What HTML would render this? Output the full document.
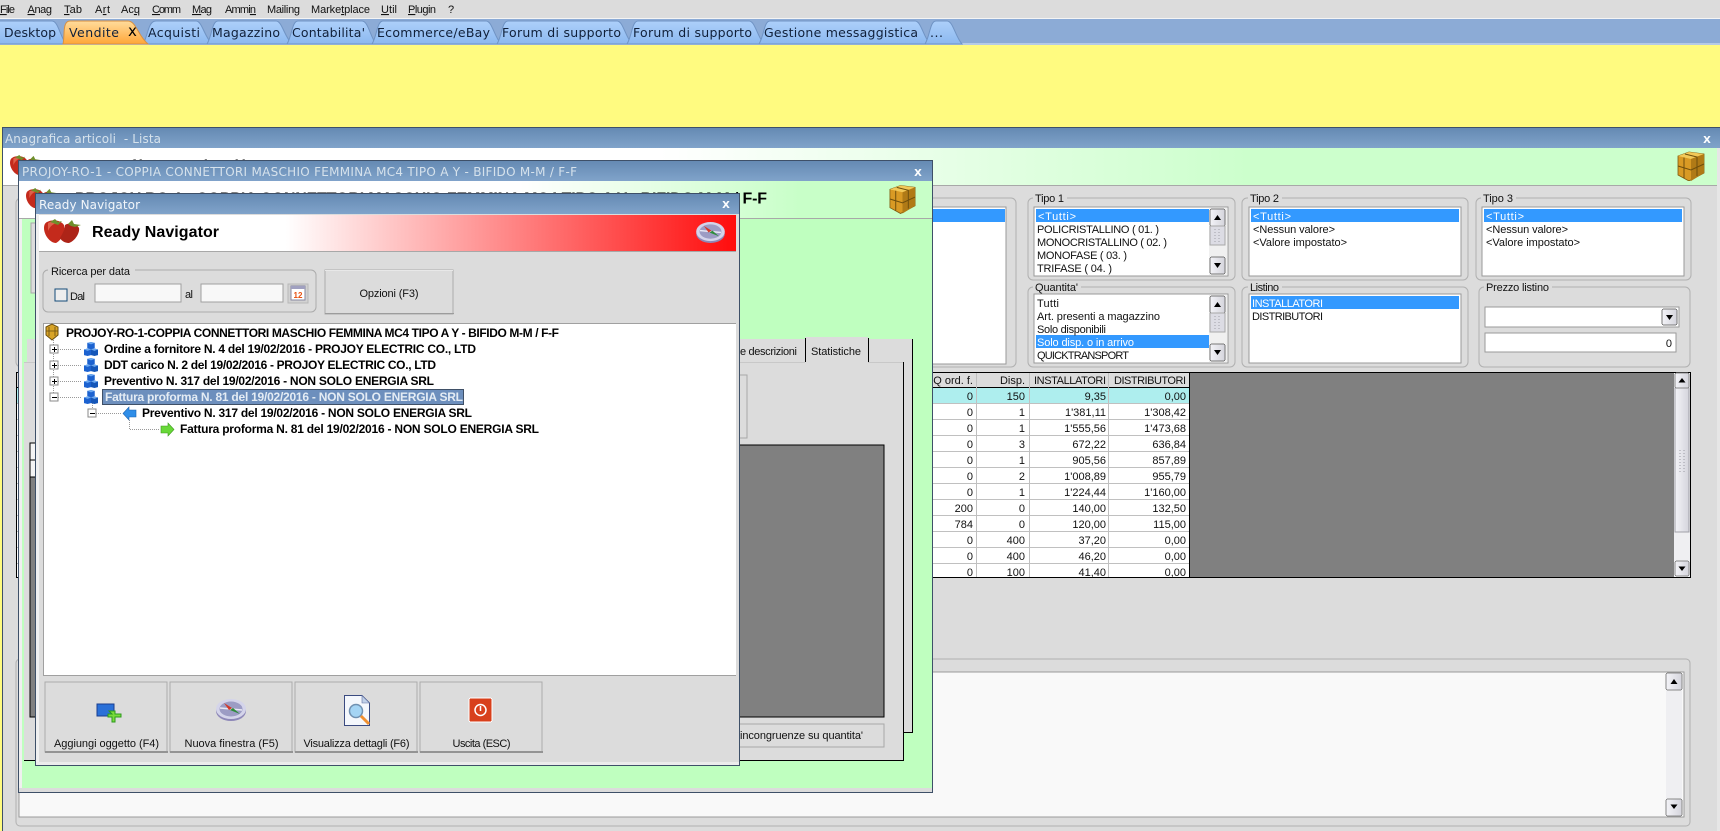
<!DOCTYPE html>
<html lang="it"><head><meta charset="utf-8"><title>Ready Navigator</title>
<style>
html,body{margin:0;padding:0;width:1720px;height:831px;overflow:hidden;background:#dcdcdc}
svg{display:block}
text{font-family:"Liberation Sans",sans-serif;font-size:11px;fill:#111;white-space:pre}
rect{shape-rendering:crispEdges}
.tab{font-family:"DejaVu Sans",sans-serif;font-size:12.5px;fill:#10203a}
.title{font-family:"DejaVu Sans",sans-serif;font-size:12px;fill:#d6e2ec}
.tree{font-family:"Liberation Sans",sans-serif;font-size:12px;font-weight:bold;fill:#000}
.num{font-size:11px;text-anchor:end}
.w{fill:#fff}
.c{text-anchor:middle}
.x{font-family:"DejaVu Sans",sans-serif;font-size:10px;font-weight:bold;fill:#fff;text-anchor:middle}
.hb{font-size:16px;font-weight:bold;fill:#000}
</style></head><body>
<svg width="1720" height="831" viewBox="0 0 1720 831" xmlns="http://www.w3.org/2000/svg">
<defs>
<linearGradient id="tb" x1="0" y1="0" x2="0" y2="1"><stop offset="0" stop-color="#add0fa"/><stop offset="1" stop-color="#8cb8f0"/></linearGradient>
<linearGradient id="to" x1="0" y1="0" x2="0" y2="1"><stop offset="0" stop-color="#ffdc9c"/><stop offset="1" stop-color="#ffa638"/></linearGradient>
<linearGradient id="tt" x1="0" y1="0" x2="0" y2="1"><stop offset="0" stop-color="#658ab3"/><stop offset="1" stop-color="#80a3ca"/></linearGradient>
<linearGradient id="h1" gradientUnits="userSpaceOnUse" x1="660" y1="0" x2="1250" y2="0"><stop offset="0" stop-color="#fff"/><stop offset="1" stop-color="#ccffcc"/></linearGradient>
<linearGradient id="h2" gradientUnits="userSpaceOnUse" x1="520" y1="0" x2="800" y2="0"><stop offset="0" stop-color="#fff"/><stop offset="1" stop-color="#c8ffc8"/></linearGradient>
<linearGradient id="h3" gradientUnits="userSpaceOnUse" x1="286" y1="0" x2="736" y2="0"><stop offset="0" stop-color="#fff"/><stop offset="1" stop-color="#ff0c0c"/></linearGradient>
<linearGradient id="sb" x1="0" y1="0" x2="1" y2="0"><stop offset="0" stop-color="#f4f4f8"/><stop offset="1" stop-color="#d4d4dc"/></linearGradient>
<symbol id="straw" viewBox="0 0 38 24" overflow="visible">
<path d="M3 2 C8 -1 17 0 20 5 C22 11 18 20 12 23 C6 23 0 15 0 8 C0 5 1 3 3 2Z" fill="#c42a1c"/>
<path d="M21 5 C26 2 33 4 35 8 C36 13 31 21 25 23 C20 23 17 20 16 18 C19 13 21 9 21 5Z" fill="#ad2418"/>
<path d="M4 3 C7 1 12 1 14 3 C10 3 6 6 4 11Z" fill="#e0604a"/>
<path d="M6 2 L11 -1 L14 2 L18 1 L14 5 L9 3Z M24 4 L28 0 L30 4 L37 5 L31 7 L27 6Z" fill="#6f8f2c"/>
</symbol>
<symbol id="box" viewBox="0 0 30 30">
<path d="M2 5 L13 1 L28 3 L28 22 L13 30 L2 24Z" fill="#d99a24" stroke="#7e5a10" stroke-width=".8"/>
<path d="M2 5 L13 1 L28 3 L15 8Z" fill="#f2c858"/>
<path d="M15 8 L15 30 L28 22 L28 3Z" fill="#b07a16"/>
<path d="M9 3 L21 6 L21 25 M8 6.500 L8 27 M2 15 L15 19 L28 13" stroke="#6e4e0c" stroke-width="1" fill="none"/>
</symbol>
<symbol id="comp" viewBox="0 0 30 22">
<ellipse cx="15" cy="12" rx="15" ry="10" fill="#8e88b8"/>
<ellipse cx="15" cy="10" rx="15" ry="10" fill="#d4d4ea"/>
<ellipse cx="15" cy="10" rx="11.500" ry="7.500" fill="#9c9cc4"/>
<path d="M4 9 L26 11" stroke="#e8e8f4" stroke-width="1.500"/>
<path d="M8 4 L16 9 L13 11Z" fill="#d43828"/><path d="M24 15 L14 11 L17 9Z" fill="#2e8c3c"/>
</symbol>
<symbol id="cube" viewBox="0 0 15 15">
<path d="M3.500 1 L7.500 0 L11.500 1 L11.500 6.500 L7.500 8 L3.500 6.500Z" fill="#1c62d0"/>
<path d="M0 8 L3.800 7 L7.500 8 L7.500 14 L3.800 15 L0 14Z" fill="#1c62d0"/>
<path d="M7.500 8 L11.200 7 L15 8 L15 14 L11.200 15 L7.500 14Z" fill="#1556b8"/>
<path d="M3.500 1 L7.500 0 L11.500 1 L7.500 2.500Z M0 8 L3.800 7 L7.500 8 L3.800 9.500Z M7.500 8 L11.200 7 L15 8 L11.200 9.500Z" fill="#6aa8f0"/>
</symbol>
</defs>

<!-- page -->
<rect width="1720" height="831" fill="#dcdcdc"/>
<rect y="18" width="1720" height="1" fill="#f4f4f4"/>
<g>
<text x="0" y="13" textLength="15"><tspan text-decoration="underline">F</tspan>ile</text>
<text x="27.500" y="13" textLength="24.500"><tspan text-decoration="underline">A</tspan>nag</text>
<text x="64" y="13" textLength="18"><tspan text-decoration="underline">T</tspan>ab</text>
<text x="95" y="13" textLength="15">A<tspan text-decoration="underline">r</tspan>t</text>
<text x="121" y="13" textLength="19">Ac<tspan text-decoration="underline">q</tspan></text>
<text x="152" y="13" textLength="29"><tspan text-decoration="underline">C</tspan>omm</text>
<text x="192" y="13" textLength="20"><tspan text-decoration="underline">M</tspan>ag</text>
<text x="225" y="13" textLength="31">Ammi<tspan text-decoration="underline">n</tspan></text>
<text x="267" y="13" textLength="33">Mailin<tspan text-decoration="underline">g</tspan></text>
<text x="311" y="13" textLength="59">Marke<tspan text-decoration="underline">t</tspan>place</text>
<text x="381" y="13" textLength="16"><tspan text-decoration="underline">U</tspan>til</text>
<text x="408" y="13" textLength="28"><tspan text-decoration="underline">P</tspan>lugin</text>
<text x="448" y="13">?</text>
</g>

<!-- tab bar -->
<rect y="19" width="1720" height="26" fill="#8cabd6"/>
<rect y="43" width="1720" height="2" fill="#b6cbe6"/>
<g stroke="#6f93c4" stroke-width="1" fill="url(#tb)">
<path d="M-4 44 V21 H52 C58 21 60 36 66 44Z"/>
<path d="M143 44 C148 36 148 21 156 21 H196 C202 21 204 36 212 44Z"/>
<path d="M207 44 C212 36 212 21 218 21 H276 C282 21 284 36 292 44Z"/>
<path d="M287 44 C292 36 292 21 298 21 H362 C368 21 370 36 376 44Z"/>
<path d="M372 44 C377 36 377 21 383 21 H486 C492 21 494 36 501 44Z"/>
<path d="M497 44 C502 36 502 21 508 21 H617 C623 21 625 36 632 44Z"/>
<path d="M627 44 C632 36 632 21 638 21 H749 C755 21 757 36 764 44Z"/>
<path d="M759 44 C764 36 764 21 770 21 H915 C921 21 923 36 930 44Z"/>
<path d="M925 44 C930 36 930 21 936 21 H947 C953 21 955 36 962 44Z"/>
</g>
<path d="M63 44 C65 36 62 21 70 21 H128 C136 21 138 36 148 44Z" fill="url(#to)" stroke="#d99040" stroke-width="1"/>
<text class="tab" x="4" y="37" textLength="52">Desktop</text>
<text class="tab" x="69" y="37" textLength="50">Vendite</text>
<text class="tab" x="132.500" y="36" text-anchor="middle" style="font-size:15px;fill:#000">x</text>
<text class="tab" x="148" y="37" textLength="52">Acquisti</text>
<text class="tab" x="212" y="37" textLength="68">Magazzino</text>
<text class="tab" x="292" y="37" textLength="73">Contabilita'</text>
<text class="tab" x="377" y="37" textLength="113">Ecommerce/eBay</text>
<text class="tab" x="502" y="37" textLength="119">Forum di supporto</text>
<text class="tab" x="633" y="37" textLength="119">Forum di supporto</text>
<text class="tab" x="764" y="37" textLength="154">Gestione messaggistica</text>
<text class="tab" x="930" y="37" textLength="13">...</text>

<!-- yellow desktop -->
<rect y="45" width="1720" height="786" fill="#fffb80"/>

<!-- window 1 -->
<rect x="2" y="127" width="1718" height="704" fill="#dcdcdc"/>
<rect x="2" y="127" width="1718" height="1" fill="#3e5068"/>
<rect x="2" y="127" width="1" height="704" fill="#3e5068"/>
<rect x="3" y="128" width="1717" height="20" fill="url(#tt)"/>
<text class="title" x="5" y="143" textLength="156">Anagrafica articoli  - Lista</text>
<text class="x" x="1707" y="143">X</text>
<rect x="3" y="148" width="1714" height="37" fill="url(#h1)"/>
<rect x="3" y="185" width="1714" height="1" fill="#a8a8a8"/>
<rect x="1717" y="148" width="3" height="683" fill="#e6e6e6"/>
<use href="#straw" x="10" y="155" width="32" height="22"/>
<text class="hb" x="60" y="171" textLength="186">Anagrafica articoli</text>
<use href="#box" x="1676" y="151" width="30" height="30"/>

<!-- left partial group -->
<rect x="16" y="198" width="1000" height="169" rx="5" fill="none" stroke="#b0b0b0" style="shape-rendering:auto"/>
<rect x="932" y="207" width="74" height="157" fill="#fff" stroke="#9a9a9a"/>
<rect x="932" y="209" width="73" height="13" fill="#3399ff"/>

<!-- list groups -->
<g fill="none" stroke="#b0b0b0">
<rect x="1028" y="198" width="207" height="82" rx="5" style="shape-rendering:auto"/>
<rect x="1242" y="198" width="226" height="82" rx="5" style="shape-rendering:auto"/>
<rect x="1476" y="198" width="215" height="82" rx="5" style="shape-rendering:auto"/>
<rect x="1028" y="287" width="207" height="80" rx="5" style="shape-rendering:auto"/>
<rect x="1242" y="287" width="226" height="80" rx="5" style="shape-rendering:auto"/>
<rect x="1479" y="287" width="211" height="80" rx="5" style="shape-rendering:auto"/>
</g>
<g fill="#dcdcdc">
<rect x="1033" y="193" width="34" height="10"/><rect x="1248" y="193" width="34" height="10"/><rect x="1481" y="193" width="35" height="10"/>
<rect x="1033" y="282" width="48" height="10"/><rect x="1248" y="282" width="34" height="10"/><rect x="1484" y="282" width="68" height="10"/>
</g>
<text x="1035" y="202" textLength="29">Tipo 1</text>
<text x="1250" y="202" textLength="29">Tipo 2</text>
<text x="1483" y="202" textLength="30">Tipo 3</text>
<text x="1035" y="291" textLength="43">Quantita'</text>
<text x="1250" y="291" textLength="29">Listino</text>
<text x="1486" y="291" textLength="63">Prezzo listino</text>
<g fill="#fff" stroke="#9a9a9a">
<rect x="1034" y="207" width="194" height="69"/><rect x="1249" y="207" width="212" height="69"/><rect x="1482" y="207" width="202" height="69"/>
<rect x="1034" y="294" width="194" height="69"/><rect x="1249" y="294" width="212" height="69"/>
<rect x="1485" y="307" width="194" height="20"/><rect x="1485" y="333" width="191" height="19"/>
</g>
<g fill="#3399ff">
<rect x="1036" y="209" width="173" height="13"/><rect x="1251" y="209" width="208" height="13"/><rect x="1484" y="209" width="198" height="13"/>
<rect x="1036" y="335" width="173" height="13"/><rect x="1251" y="296" width="208" height="13"/>
</g>
<!-- list scrollbars -->
<g>
<rect x="1209" y="208" width="18" height="67" fill="#f0f0f0"/>
<rect x="1209" y="295" width="18" height="67" fill="#f0f0f0"/>
<rect x="1210" y="209" width="15" height="17" rx="2" fill="url(#sb)" stroke="#777"/>
<rect x="1210" y="226" width="15" height="19" fill="#dcdce4" stroke="#a8a8a8"/>
<rect x="1210" y="257" width="15" height="17" rx="2" fill="url(#sb)" stroke="#777"/>
<rect x="1210" y="296" width="15" height="17" rx="2" fill="url(#sb)" stroke="#777"/>
<rect x="1210" y="313" width="15" height="19" fill="#dcdce4" stroke="#a8a8a8"/>
<rect x="1210" y="344" width="15" height="17" rx="2" fill="url(#sb)" stroke="#777"/>
<path d="M1214 220 L1221 220 L1217.500 215Z M1214 263 L1221 263 L1217.500 268Z M1214 307 L1221 307 L1217.500 302Z M1214 350 L1221 350 L1217.500 355Z" fill="#000"/>
<path d="M1215 229 V243 M1219 229 V243 M1215 316 V330 M1219 316 V330" stroke="#a0a0a8" stroke-width="1" stroke-dasharray="1 2"/>
</g>
<text class="w" x="1038" y="220" textLength="38">&lt;Tutti&gt;</text>
<text x="1037" y="233" textLength="122">POLICRISTALLINO ( 01. )</text>
<text x="1037" y="246" textLength="130">MONOCRISTALLINO ( 02. )</text>
<text x="1037" y="259" textLength="90">MONOFASE ( 03. )</text>
<text x="1037" y="272" textLength="75">TRIFASE ( 04. )</text>
<text class="w" x="1253" y="220" textLength="38">&lt;Tutti&gt;</text>
<text x="1253" y="233" textLength="82">&lt;Nessun valore&gt;</text>
<text x="1253" y="246" textLength="94">&lt;Valore impostato&gt;</text>
<text class="w" x="1486" y="220" textLength="38">&lt;Tutti&gt;</text>
<text x="1486" y="233" textLength="82">&lt;Nessun valore&gt;</text>
<text x="1486" y="246" textLength="94">&lt;Valore impostato&gt;</text>
<text x="1037" y="307" textLength="22">Tutti</text>
<text x="1037" y="320" textLength="123">Art. presenti a magazzino</text>
<text x="1037" y="333" textLength="69">Solo disponibili</text>
<text class="w" x="1037" y="346" textLength="97">Solo disp. o in arrivo</text>
<text x="1037" y="359" textLength="92">QUICKTRANSPORT</text>
<text class="w" x="1252" y="307" textLength="71">INSTALLATORI</text>
<text x="1252" y="320" textLength="71">DISTRIBUTORI</text>
<rect x="1662" y="309" width="15" height="16" rx="2" fill="url(#sb)" stroke="#777"/>
<path d="M1666 315 L1673 315 L1669.500 320Z" fill="#000"/>
<text x="1672" y="347" text-anchor="end">0</text>

<!-- table -->
<rect x="16" y="372" width="1674" height="205" fill="#fff"/>
<rect x="1189" y="373" width="485" height="204" fill="#808080"/>
<rect x="16" y="373" width="1173" height="14" fill="#dcdcdc"/>
<rect x="16" y="388" width="1173" height="15" fill="#aeeeee"/>
<rect x="16" y="387" width="1173" height="1" fill="#000"/>
<g fill="#c0c0c0">
<rect x="16" y="403" width="1173" height="1"/><rect x="16" y="419" width="1173" height="1"/><rect x="16" y="435" width="1173" height="1"/><rect x="16" y="451" width="1173" height="1"/><rect x="16" y="467" width="1173" height="1"/><rect x="16" y="483" width="1173" height="1"/><rect x="16" y="499" width="1173" height="1"/><rect x="16" y="515" width="1173" height="1"/><rect x="16" y="531" width="1173" height="1"/><rect x="16" y="547" width="1173" height="1"/><rect x="16" y="563" width="1173" height="1"/>
<rect x="976" y="373" width="1" height="204"/><rect x="1029" y="373" width="1" height="204"/><rect x="1108" y="373" width="1" height="204"/>
</g>
<g fill="#000">
<rect x="16" y="372" width="1675" height="1"/><rect x="16" y="577" width="1675" height="1"/><rect x="16" y="372" width="1" height="206"/><rect x="1690" y="372" width="1" height="206"/><rect x="1189" y="373" width="1" height="204"/>
</g>
<g>
<text class="num" x="973" y="384">Q ord. f.</text><text class="num" x="1025" y="384">Disp.</text><text class="num" x="1106" y="384" textLength="72">INSTALLATORI</text><text class="num" x="1186" y="384" textLength="72">DISTRIBUTORI</text>
<text class="num" x="973" y="400">0</text><text class="num" x="1025" y="400">150</text><text class="num" x="1106" y="400">9,35</text><text class="num" x="1186" y="400">0,00</text>
<text class="num" x="973" y="416">0</text><text class="num" x="1025" y="416">1</text><text class="num" x="1106" y="416">1'381,11</text><text class="num" x="1186" y="416">1'308,42</text>
<text class="num" x="973" y="432">0</text><text class="num" x="1025" y="432">1</text><text class="num" x="1106" y="432">1'555,56</text><text class="num" x="1186" y="432">1'473,68</text>
<text class="num" x="973" y="448">0</text><text class="num" x="1025" y="448">3</text><text class="num" x="1106" y="448">672,22</text><text class="num" x="1186" y="448">636,84</text>
<text class="num" x="973" y="464">0</text><text class="num" x="1025" y="464">1</text><text class="num" x="1106" y="464">905,56</text><text class="num" x="1186" y="464">857,89</text>
<text class="num" x="973" y="480">0</text><text class="num" x="1025" y="480">2</text><text class="num" x="1106" y="480">1'008,89</text><text class="num" x="1186" y="480">955,79</text>
<text class="num" x="973" y="496">0</text><text class="num" x="1025" y="496">1</text><text class="num" x="1106" y="496">1'224,44</text><text class="num" x="1186" y="496">1'160,00</text>
<text class="num" x="973" y="512">200</text><text class="num" x="1025" y="512">0</text><text class="num" x="1106" y="512">140,00</text><text class="num" x="1186" y="512">132,50</text>
<text class="num" x="973" y="528">784</text><text class="num" x="1025" y="528">0</text><text class="num" x="1106" y="528">120,00</text><text class="num" x="1186" y="528">115,00</text>
<text class="num" x="973" y="544">0</text><text class="num" x="1025" y="544">400</text><text class="num" x="1106" y="544">37,20</text><text class="num" x="1186" y="544">0,00</text>
<text class="num" x="973" y="560">0</text><text class="num" x="1025" y="560">400</text><text class="num" x="1106" y="560">46,20</text><text class="num" x="1186" y="560">0,00</text>
<text class="num" x="973" y="576">0</text><text class="num" x="1025" y="576">100</text><text class="num" x="1106" y="576">41,40</text><text class="num" x="1186" y="576">0,00</text>
</g>
<rect x="1674" y="373" width="16" height="204" fill="#efeff2"/>
<rect x="1675" y="388" width="14" height="144" fill="url(#sb)" stroke="#a0a0a8"/>
<rect x="1675" y="373" width="14" height="15" rx="2" fill="url(#sb)" stroke="#888"/>
<rect x="1675" y="561" width="14" height="15" rx="2" fill="url(#sb)" stroke="#888"/>
<path d="M1678.500 382.500 L1685.500 382.500 L1682 378Z M1678.500 566.500 L1685.500 566.500 L1682 571Z" fill="#000"/>
<path d="M1680 450 V472 M1684 450 V472" stroke="#9a9aa4" stroke-width="1" stroke-dasharray="1 2"/>

<!-- bottom group + textarea -->
<rect x="16" y="659" width="1674" height="167" rx="4" fill="none" stroke="#b0b0b0" style="shape-rendering:auto"/>
<rect x="19" y="672" width="1665" height="145" fill="#f9f9f9" stroke="#9a9a9a"/>
<rect x="1666" y="673" width="16" height="143" fill="#efeff2"/>
<rect x="1666" y="673" width="16" height="17" rx="2" fill="url(#sb)" stroke="#888"/>
<rect x="1666" y="799" width="16" height="17" rx="2" fill="url(#sb)" stroke="#888"/>
<path d="M1670.500 684 L1677.500 684 L1674 679Z M1670.500 804.500 L1677.500 804.500 L1674 809Z" fill="#000"/>

<!-- window 2 -->
<rect x="18" y="160" width="915" height="633" fill="#bfffbf"/>
<rect x="18" y="160" width="915" height="1" fill="#3e5068"/><rect x="18" y="792" width="915" height="1" fill="#3e5068"/>
<rect x="18" y="160" width="1" height="633" fill="#3e5068"/><rect x="932" y="160" width="1" height="633" fill="#3e5068"/>
<rect x="19" y="161" width="913" height="20" fill="url(#tt)"/>
<text class="title" x="22" y="176" textLength="555">PROJOY-RO-1 - COPPIA CONNETTORI MASCHIO FEMMINA MC4 TIPO A Y - BIFIDO M-M / F-F</text>
<text class="x" x="918" y="176">X</text>
<rect x="19" y="181" width="913" height="37" fill="url(#h2)"/>
<rect x="19" y="218" width="913" height="1" fill="#a8a8a8"/>
<rect x="19" y="219" width="3" height="569" fill="#f0f0f0"/>
<rect x="19" y="788" width="913" height="4" fill="#dcdcdc"/>
<use href="#straw" x="26" y="188" width="32" height="22"/>
<text class="hb" x="75" y="203.500" textLength="692">PROJOY-RO-1 - COPPIA CONNETTORI MASCHIO FEMMINA MC4 TIPO A Y - BIFIDO M-M / F-F</text>
<use href="#box" x="888" y="184" width="29" height="30"/>
<!-- tabs/panels in window 2 -->
<rect x="31" y="223" width="8" height="70" fill="#dcdcdc" stroke="#a8a8a8"/>
<rect x="27" y="339" width="885" height="393" fill="#dcdcdc"/>
<rect x="912" y="339" width="1" height="394" fill="#000"/><rect x="903" y="732" width="10" height="1" fill="#000"/>
<rect x="24" y="362" width="879" height="398" fill="#dcdcdc"/>
<rect x="903" y="362" width="1" height="399" fill="#000"/><rect x="24" y="760" width="880" height="1" fill="#000"/>
<rect x="24" y="362" width="879" height="1" fill="#c8c8c8"/>
<rect x="805" y="337" width="63" height="26" fill="#dcdcdc"/>
<rect x="805" y="338" width="1" height="24" fill="#000"/><rect x="868" y="338" width="1" height="24" fill="#000"/>
<text x="740" y="355" textLength="57">e descrizioni</text>
<text x="811" y="355" textLength="50">Statistiche</text>
<rect x="600" y="375" width="147" height="63" fill="#dcdcdc" stroke="#a8a8a8"/>
<rect x="30" y="445" width="854" height="272" fill="#808080" stroke="#000"/>
<rect x="30" y="443" width="8" height="17" fill="#f4f4f4" stroke="#000"/>
<rect x="30" y="460" width="8" height="17" fill="#f4f4f4" stroke="#000"/>
<rect x="600" y="724" width="284" height="23" fill="#dcdcdc" stroke="#a8a8a8"/>
<text x="740" y="739" textLength="123">incongruenze su quantita'</text>

<!-- window 3 -->
<rect x="36" y="193" width="704" height="573" fill="#dcdcdc"/>
<rect x="36" y="193" width="704" height="1" fill="#3e5068"/><rect x="36" y="765" width="704" height="1" fill="#3e5068"/>
<rect x="35" y="193" width="1" height="573" fill="#3e5068"/><rect x="739" y="193" width="1" height="573" fill="#3e5068"/>
<rect x="36" y="194" width="703" height="20" fill="url(#tt)"/>
<text class="title" x="39" y="209" textLength="101" style="fill:#f2f6fa">Ready Navigator</text>
<text class="x" x="726" y="208">X</text>
<rect x="36" y="214" width="703" height="548" fill="#dcdcdc"/>
<rect x="36" y="214" width="3" height="551" fill="#f0f0f0"/>
<rect x="36" y="762" width="703" height="3" fill="#ececec"/>
<rect x="39" y="215" width="697" height="36" fill="url(#h3)"/>
<rect x="39" y="251" width="697" height="1" fill="#a8a8a8"/>
<use href="#straw" x="44" y="220" width="38" height="24"/>
<text x="92" y="237" textLength="127" style="font-size:16px;font-weight:bold;fill:#000">Ready Navigator</text>
<use href="#comp" x="695" y="222" width="31" height="21"/>

<rect x="43" y="270" width="273" height="42" rx="5" fill="none" stroke="#ababab" style="shape-rendering:auto"/>
<rect x="48" y="265" width="87" height="10" fill="#dcdcdc"/>
<text x="51" y="275" textLength="79">Ricerca per data</text>
<rect x="55" y="289" width="12" height="12" fill="#eeeeee" stroke="#134a78"/>
<text x="70" y="300" textLength="15">Dal</text>
<rect x="95" y="284" width="86" height="18" fill="#f8f8f8" stroke="#a0a0a0"/>
<text x="185" y="298" textLength="8">al</text>
<rect x="201" y="284" width="82" height="18" fill="#f8f8f8" stroke="#a0a0a0"/>
<rect x="288" y="284" width="20" height="19" fill="#d2d2d2" stroke="#b8b8b8"/>
<rect x="291" y="286" width="14" height="14" fill="#fff" stroke="#8888a0"/>
<rect x="291" y="286" width="14" height="3" fill="#a0a0c0"/>
<text x="298" y="298" text-anchor="middle" style="font-size:8px;font-weight:bold;fill:#e85010">12</text>

<rect x="325" y="270" width="128" height="44" fill="#dcdcdc" stroke="#ababab"/>
<rect x="325" y="270" width="128" height="1" fill="#e8e8e8"/>
<rect x="325" y="313" width="129" height="1" fill="#9c9c9c"/>
<text class="c" x="389" y="297" textLength="59">Opzioni (F3)</text>

<!-- tree -->
<rect x="43" y="323" width="693" height="353" fill="#fff"/>
<rect x="43" y="323" width="693" height="1" fill="#a0a0a0"/><rect x="43" y="323" width="1" height="353" fill="#a0a0a0"/><rect x="43" y="675" width="693" height="1" fill="#a0a0a0"/>
<g stroke="#999" stroke-width="1" stroke-dasharray="1 1" fill="none">
<path d="M53.500 340 V393.500 M58 349.500 H82 M58 365.500 H82 M58 381.500 H82 M58 397.500 H82 M92.500 401 V409 M96 413.500 H121 M129.500 420 V429.500 H160"/>
</g>
<g fill="#fff" stroke="#8a8a8a">
<rect x="50" y="345" width="8" height="8"/><rect x="50" y="361" width="8" height="8"/><rect x="50" y="377" width="8" height="8"/><rect x="50" y="393" width="8" height="8"/><rect x="88" y="409" width="8" height="8"/>
</g>
<path d="M52 349.500 H57 M54.500 347 V352 M52 365.500 H57 M54.500 363 V368 M52 381.500 H57 M54.500 379 V384 M52 397.500 H57 M90 413.500 H95" stroke="#000" stroke-width="1"/>
<path d="M46 327 L52 324 L58 327 L58 335 L52 340 L46 335Z" fill="#d8a428" stroke="#6a4e10"/>
<path d="M49 327 V336 M55 327 V336 M46 331 H58" stroke="#6a4e10" stroke-width=".8"/>
<use href="#cube" x="84" y="342" width="14" height="14"/><use href="#cube" x="84" y="358" width="14" height="14"/><use href="#cube" x="84" y="374" width="14" height="14"/><use href="#cube" x="84" y="390" width="14" height="14"/>
<path d="M123 413.500 L129 407 V410 H136 V417 H129 V420Z" fill="#2f8ee8" stroke="#1c62b0" stroke-width=".6"/>
<path d="M174 429.500 L168 423 V426 H161 V433 H168 V436Z" fill="#68d838" stroke="#3c9a1c" stroke-width=".6"/>
<rect x="102" y="389" width="362" height="16" fill="#6d8fbd"/>
<rect x="102.500" y="389.500" width="361" height="15" fill="none" stroke="#111" stroke-dasharray="1 1"/>
<text class="tree" x="66" y="337" textLength="493">PROJOY-RO-1-COPPIA CONNETTORI MASCHIO FEMMINA MC4 TIPO A Y - BIFIDO M-M / F-F</text>
<text class="tree" x="104" y="353" textLength="372">Ordine a fornitore N. 4 del 19/02/2016 - PROJOY ELECTRIC CO., LTD</text>
<text class="tree" x="104" y="369" textLength="332">DDT carico N. 2 del 19/02/2016 - PROJOY ELECTRIC CO., LTD</text>
<text class="tree" x="104" y="385" textLength="330">Preventivo N. 317 del 19/02/2016 - NON SOLO ENERGIA SRL</text>
<text class="tree" x="105" y="401" textLength="358" style="fill:#e4ecf4">Fattura proforma N. 81 del 19/02/2016 - NON SOLO ENERGIA SRL</text>
<text class="tree" x="142" y="417" textLength="330">Preventivo N. 317 del 19/02/2016 - NON SOLO ENERGIA SRL</text>
<text class="tree" x="180" y="433" textLength="359">Fattura proforma N. 81 del 19/02/2016 - NON SOLO ENERGIA SRL</text>

<!-- bottom buttons -->
<g fill="#dcdcdc" stroke="#ababab">
<rect x="45" y="682" width="122" height="70"/><rect x="170" y="682" width="122" height="70"/><rect x="295" y="682" width="122" height="70"/><rect x="420" y="682" width="122" height="70"/>
</g>
<g fill="#949494"><rect x="45" y="751" width="123" height="2"/><rect x="170" y="751" width="123" height="2"/><rect x="295" y="751" width="123" height="2"/><rect x="420" y="751" width="123" height="2"/></g>
<text class="c" x="106.500" y="747" textLength="105">Aggiungi oggetto (F4)</text>
<text class="c" x="231.500" y="747" textLength="94">Nuova finestra (F5)</text>
<text class="c" x="356.500" y="747" textLength="106">Visualizza dettagli (F6)</text>
<text class="c" x="481.500" y="747" textLength="58">Uscita (ESC)</text>
<rect x="97" y="704" width="17" height="12" fill="#2a70d8" stroke="#1a3e90"/>
<path d="M109 711 H115 V714 H121 V717 H115 V722 H112 V717 H108 V714 H112Z" fill="#7adc3c" stroke="#2c9a1c"/>
<use href="#comp" x="216" y="699" width="30" height="22"/>
<path d="M344.500 695.500 H362 L369.500 703 V725.500 H344.500Z" fill="#f4f7fc" stroke="#3a4a80"/>
<path d="M362 695.500 V703 H369.500Z" fill="#c0d0e8" stroke="#6070a0" stroke-width=".6"/>
<circle cx="356" cy="711" r="6.500" fill="#a4d4f4" stroke="#7090b0" stroke-width="1.500"/>
<path d="M361 716 L369 724" stroke="#f09030" stroke-width="3"/>
<rect x="469" y="698" width="23" height="24" rx="2" fill="#d8401c" stroke="#fff"/>
<circle cx="480.500" cy="710" r="5.500" fill="none" stroke="#fff" stroke-width="1.500"/>
<path d="M480.500 706 V711" stroke="#fff" stroke-width="1.500"/>
</svg>
</body></html>
